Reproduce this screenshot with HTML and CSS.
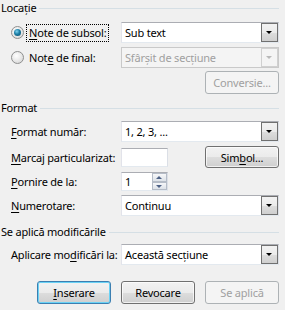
FILE: index.html
```html
<!DOCTYPE html>
<html>
<head>
    <meta charset="utf-8">
    <title>Note de subsol și note de final</title>
    <link rel="stylesheet" href="styles.css">
</head>
<body>

    <div class="dialog">
        <!-- Locatie -->
        <div class="group-title">Locație</div>

        <div class="row row-loc1">
            <label class="opt">
                <span class="radio checked"></span>
                <span class="focus"><u>N</u>ote de subsol:</span>
            </label>
            <div class="combo">
                <span class="combo-text">Sub text</span>
                <span class="drop"></span>
            </div>
        </div>

        <div class="row row-loc2">
            <label class="opt">
                <span class="radio"></span>
                <span class="opt-text">Not<u>e</u> de final:</span>
            </label>
            <div class="combo disabled">
                <span class="combo-text">Sfârșit de secțiune</span>
                <span class="drop"></span>
            </div>
        </div>

        <div class="row row-btn">
            <button class="btn disabled">Conversie...</button>
        </div>

        <!-- Format -->
        <div class="group-title title-format">Format</div>

        <div class="row row-f1">
            <span class="label"><u>F</u>ormat număr:</span>
            <div class="combo">
                <span class="combo-text">1, 2, 3, ...</span>
                <span class="drop"></span>
            </div>
        </div>

        <div class="row row-f2">
            <span class="label"><u>M</u>arcaj particularizat:</span>
            <div class="edit short"></div>
            <button class="btn simbol">Sim<u>b</u>ol...</button>
        </div>

        <div class="row row-f3">
            <span class="label"><u>P</u>ornire de la:</span>
            <div class="edit short spin-edit">
                <span class="combo-text">1</span>
                <span class="spin">
                    <span class="spin-up"></span>
                    <span class="spin-down"></span>
                </span>
            </div>
        </div>

        <div class="row row-f4">
            <span class="label"><u>N</u>umerotare:</span>
            <div class="combo">
                <span class="combo-text">Continuu</span>
                <span class="drop"></span>
            </div>
        </div>

        <!-- Se aplica -->
        <div class="group-title title-apply">Se aplică modificările</div>

        <div class="row row-a1">
            <span class="label">Aplicare mo<u>d</u>ificări la:</span>
            <div class="combo">
                <span class="combo-text">Această secțiune</span>
                <span class="drop"></span>
            </div>
        </div>

        <div class="buttons">
            <button class="btn default"><u>I</u>nserare</button>
            <button class="btn">Revocare</button>
            <button class="btn disabled">Se aplică</button>
        </div>
    </div>

</body>
</html>
```

FILE: styles.css
```css
body {
    margin: 0;
    background-color: #f0f0f0;
    font-family: "Noto Sans", sans-serif;
    font-size: 11px;
    letter-spacing: -0.2px;
    color: #000;
}
.dialog {
    width: 285px;
    height: 310px;
    box-sizing: border-box;
    padding: 0 6px 0 1px;
    overflow: hidden;
}
u {
    text-decoration-thickness: 1px;
    text-underline-offset: 2px;
}

/* group headers with the light rule */
.group-title {
    display: flex;
    align-items: center;
    height: 15px;
    line-height: 15px;
}
.group-title::after {
    content: "";
    flex: 1;
    border-top: 1px solid #d5dfe5;
    margin-left: 3px;
    margin-top: 1px;
}
.title-format {
    margin-top: 6px;
}
.title-apply {
    margin-top: 8px;
}

.row {
    display: flex;
    align-items: center;
    height: 21px;
    padding-left: 10px;
}
.row-loc1 { margin-top: 7px; }
.row-loc2 { margin-top: 4px; }
.row-btn {
    margin-top: 3px;
    height: 23px;
    justify-content: flex-end;
}
.row-f1 { margin-top: 6px; }
.row-f2 { margin-top: 4px; height: 22px; }
.row-f3 { margin-top: 3px; }
.row-f4 { margin-top: 3px; }
.row-a1 { margin-top: 5px; }

.label,
.opt {
    width: 110px;
    flex-shrink: 0;
    white-space: nowrap;
}
.opt {
    display: flex;
    align-items: center;
}
.opt-text {
    padding: 0 2px;
}
.focus {
    outline: 1px dotted #000;
    padding: 0 2px 1px 2px;
    line-height: 15px;
}

/* radio buttons */
.radio {
    width: 13px;
    height: 13px;
    box-sizing: border-box;
    border-radius: 50%;
    border: 1px solid #8e8f8f;
    background: radial-gradient(circle at 40% 35%, #ffffff 0%, #e6e6e6 55%, #cfcfcf 100%);
    margin-right: 3px;
    position: relative;
}
.radio.checked::after {
    content: "";
    position: absolute;
    left: 2px;
    top: 2px;
    width: 7px;
    height: 7px;
    border-radius: 50%;
    background: radial-gradient(circle at 40% 35%, #7fd3f0 0%, #1b7ea6 45%, #0b4a66 100%);
}

/* combo boxes */
.combo {
    width: 158px;
    height: 21px;
    box-sizing: border-box;
    border: 1px solid #abadb3;
    border-right-color: #dbdfe6;
    border-bottom-color: #e3e9ef;
    border-left-color: #e2e3ea;
    background: #fff;
    display: flex;
    align-items: center;
    justify-content: space-between;
}
.combo-text {
    padding-left: 3px;
    white-space: nowrap;
}
.drop {
    width: 17px;
    height: 19px;
    box-sizing: border-box;
    border: 1px solid #707070;
    background: linear-gradient(to bottom, #f2f2f2 0%, #ebebeb 50%, #dddddd 51%, #cfcfcf 100%);
    position: relative;
}
.drop::after {
    content: "";
    position: absolute;
    left: 4px;
    top: 7px;
    border-left: 3px solid transparent;
    border-right: 3px solid transparent;
    border-top: 3px solid #000;
}
.combo.disabled {
    background: #f4f4f4;
    border-color: #c9c9c9;
    color: #a0a0a0;
}
.combo.disabled .drop {
    border-color: #d0d0d0;
    background: #f4f4f4;
}
.combo.disabled .drop::after {
    border-top-color: #b8b8b8;
}

/* edits */
.edit {
    height: 19px;
    box-sizing: border-box;
    border: 1px solid #abadb3;
    border-right-color: #dbdfe6;
    border-bottom-color: #e3e9ef;
    border-left-color: #e2e3ea;
    background: #fff;
}
.short {
    width: 47px;
}
.spin-edit {
    display: flex;
    align-items: center;
    justify-content: space-between;
}
.spin {
    display: flex;
    flex-direction: column;
    width: 15px;
    height: 17px;
}
.spin-up,
.spin-down {
    flex: 1;
    box-sizing: border-box;
    border: 1px solid #b5bcc7;
    background: linear-gradient(to bottom, #f6f7f9, #dde2e8);
    position: relative;
}
.spin-up::after,
.spin-down::after {
    content: "";
    position: absolute;
    left: 3px;
    top: 2px;
    border-left: 3px solid transparent;
    border-right: 3px solid transparent;
}
.spin-up::after {
    border-bottom: 3px solid #4d6185;
}
.spin-down::after {
    border-top: 3px solid #4d6185;
}

/* buttons */
.btn {
    width: 74px;
    height: 23px;
    padding: 0;
    font-family: inherit;
    font-size: 11px;
    letter-spacing: -0.2px;
    color: #000;
    border: 1px solid #707070;
    border-radius: 3px;
    background: linear-gradient(to bottom, #f2f2f2 0%, #ebebeb 50%, #dddddd 51%, #cfcfcf 100%);
    box-shadow: inset 0 0 0 1px rgba(255, 255, 255, 0.7);
}
.btn.simbol {
    height: 22px;
    margin-left: auto;
}
.btn.default {
    border-color: #3c7fb1;
    box-shadow: inset 0 0 0 1px #6ad2f5;
}
.btn.disabled {
    color: #a0a0a0;
    border-color: #adb2b5;
    background: #f4f4f4;
    box-shadow: none;
}
.buttons {
    display: flex;
    justify-content: flex-end;
    gap: 10px;
    margin-top: 16px;
}
```
